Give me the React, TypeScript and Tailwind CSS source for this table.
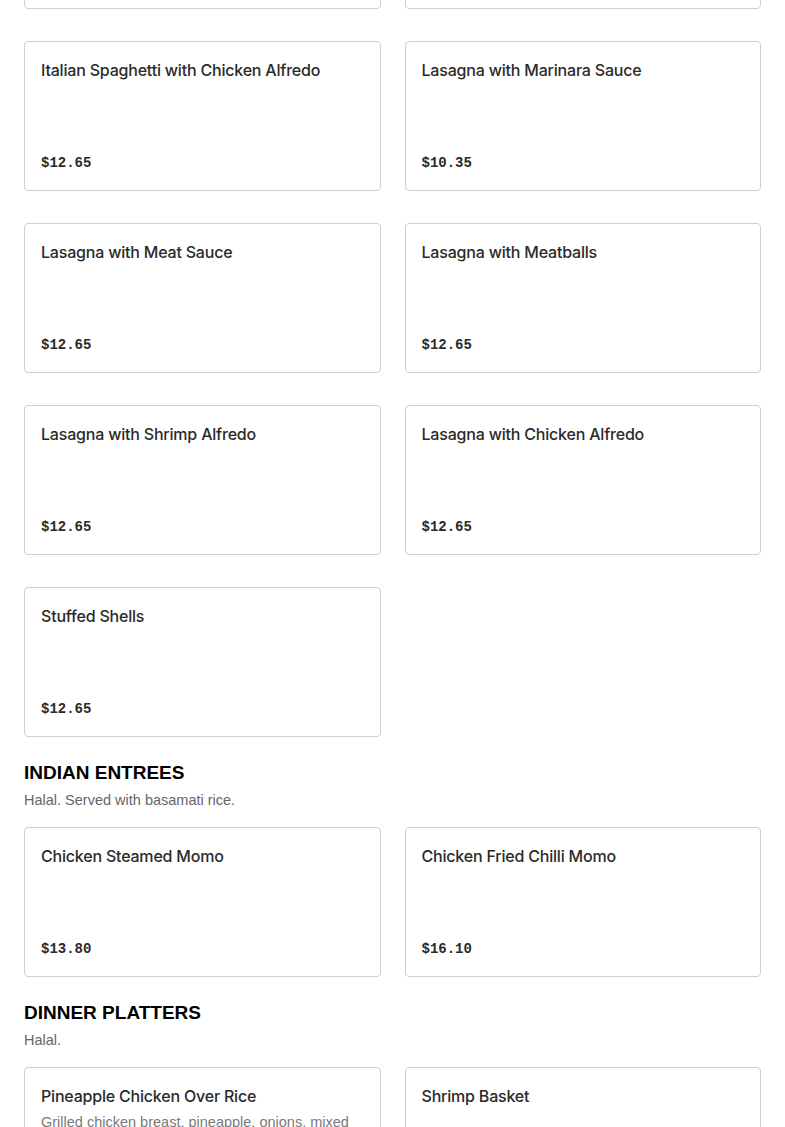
import React from 'react'

interface Item {
  name: string
  price?: string
  description?: string
}

interface Section {
  title?: string
  note?: string
  items: Item[]
}

const sections: Section[] = [
  {
    items: [
      { name: 'Baked Ziti', price: '$11.50' },
      { name: 'Baked Ziti with Meatballs', price: '$12.65' },
      { name: 'Italian Spaghetti with Chicken Alfredo', price: '$12.65' },
      { name: 'Lasagna with Marinara Sauce', price: '$10.35' },
      { name: 'Lasagna with Meat Sauce', price: '$12.65' },
      { name: 'Lasagna with Meatballs', price: '$12.65' },
      { name: 'Lasagna with Shrimp Alfredo', price: '$12.65' },
      { name: 'Lasagna with Chicken Alfredo', price: '$12.65' },
      { name: 'Stuffed Shells', price: '$12.65' },
    ],
  },
  {
    title: 'INDIAN ENTREES',
    note: 'Halal. Served with basamati rice.',
    items: [
      { name: 'Chicken Steamed Momo', price: '$13.80' },
      { name: 'Chicken Fried Chilli Momo', price: '$16.10' },
    ],
  },
  {
    title: 'DINNER PLATTERS',
    note: 'Halal.',
    items: [
      {
        name: 'Pineapple Chicken Over Rice',
        description: 'Grilled chicken breast, pineapple, onions, mixed peppers served over rice.',
        price: '$15.00',
      },
      { name: 'Shrimp Basket', price: '$14.95' },
    ],
  },
]

function MenuCard({ item }: { item: Item }) {
  return (
    <div className="h-[150px] rounded border border-[#cfcfcf] bg-white px-4 pt-4 pb-[15px] flex flex-col justify-between">
      <div>
        <h3 className="text-[16px] leading-6 font-medium text-[#2a2a2a] font-['Inter',sans-serif] tracking-[-0.2px]">
          {item.name}
        </h3>
        {item.description && (
          <p className="mt-1 text-[14.5px] leading-5 text-[#7a7a7a] font-['Liberation_Sans',sans-serif]">
            {item.description}
          </p>
        )}
      </div>
      {item.price && (
        <span className="text-[14px] leading-6 font-bold text-[#2a2a2a] font-['Liberation_Mono',monospace]">
          {item.price}
        </span>
      )}
    </div>
  )
}

export default function App() {
  return (
    <div className="min-h-screen bg-white overflow-hidden">
      <div className="px-6 -mt-[141px]">
        {sections.map((section, i) => (
          <section key={i} className={i > 0 ? 'mt-6' : ''}>
            {section.title && (
              <div className="mb-[17px]">
                <h2 className="text-[19px] leading-6 font-black text-black font-['Liberation_Sans',sans-serif]">
                  {section.title}
                </h2>
                <p className="mt-[5px] text-[14.5px] leading-5 text-[#666666] font-['Liberation_Sans',sans-serif]">
                  {section.note}
                </p>
              </div>
            )}
            <div className="grid grid-cols-2 gap-x-6 gap-y-8">
              {section.items.map((item) => (
                <MenuCard key={item.name} item={item} />
              ))}
            </div>
          </section>
        ))}
      </div>
    </div>
  )
}
